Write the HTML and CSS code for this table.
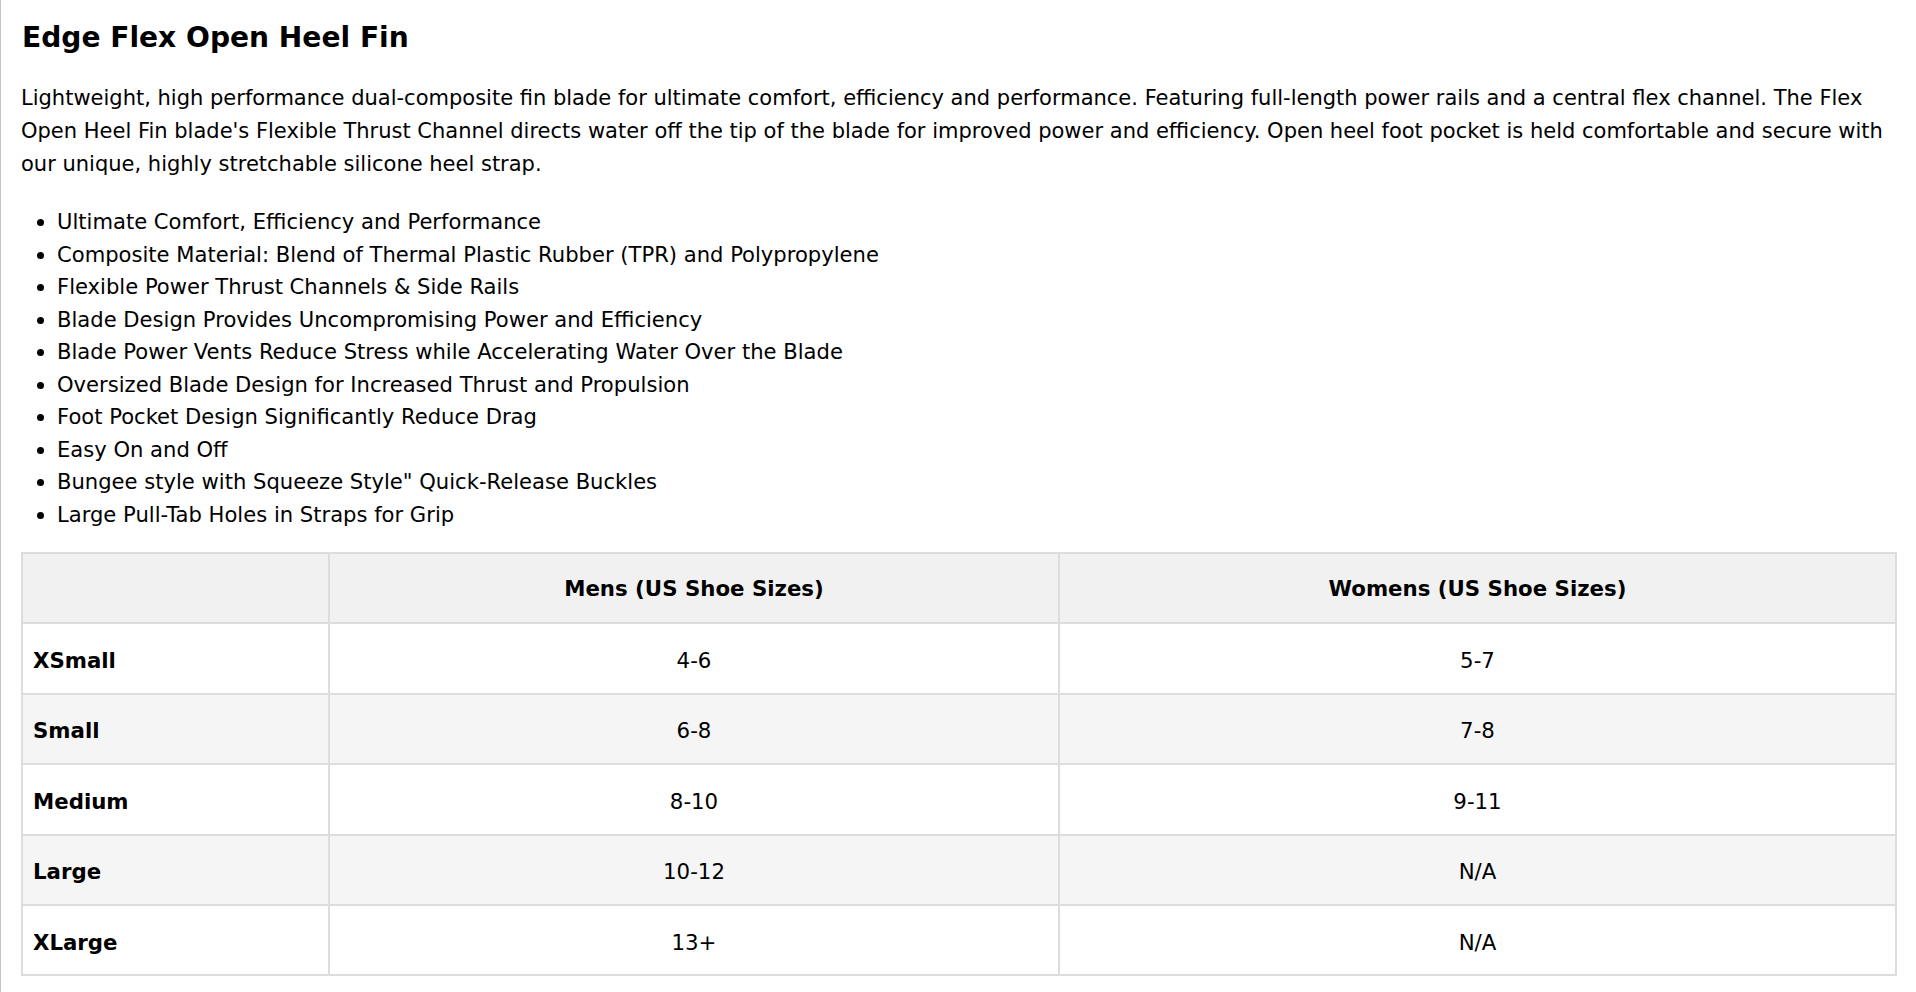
FILE: index.html
```html
<!DOCTYPE html>
<html lang="en">
<head>
<meta charset="utf-8">
<title>Edge Flex Open Heel Fin</title>
<link rel="stylesheet" href="styles.css">
</head>
<body>
<div class="page">
  <h1 class="title">Edge Flex Open Heel Fin</h1>
  <p class="desc">Lightweight, high performance dual-composite fin blade for ultimate comfort, efficiency and performance. Featuring full-length power rails and a central flex channel. The Flex Open Heel Fin blade's Flexible Thrust Channel directs water off the tip of the blade for improved power and efficiency. Open heel foot pocket is held comfortable and secure with our unique, highly stretchable silicone heel strap.</p>
  <ul class="features">
    <li>Ultimate Comfort, Efficiency and Performance</li>
    <li>Composite Material: Blend of Thermal Plastic Rubber (TPR) and Polypropylene</li>
    <li>Flexible Power Thrust Channels &amp; Side Rails</li>
    <li>Blade Design Provides Uncompromising Power and Efficiency</li>
    <li>Blade Power Vents Reduce Stress while Accelerating Water Over the Blade</li>
    <li>Oversized Blade Design for Increased Thrust and Propulsion</li>
    <li>Foot Pocket Design Significantly Reduce Drag</li>
    <li>Easy On and Off</li>
    <li>Bungee style with Squeeze Style" Quick-Release Buckles</li>
    <li>Large Pull-Tab Holes in Straps for Grip</li>
  </ul>
  <table class="sizes">
    <colgroup>
      <col class="c-size">
      <col class="c-mens">
      <col class="c-womens">
    </colgroup>
    <thead>
      <tr><th></th><th>Mens (US Shoe Sizes)</th><th>Womens (US Shoe Sizes)</th></tr>
    </thead>
    <tbody>
      <tr><th class="rowhead">XSmall</th><td>4-6</td><td>5-7</td></tr>
      <tr><th class="rowhead">Small</th><td>6-8</td><td>7-8</td></tr>
      <tr><th class="rowhead">Medium</th><td>8-10</td><td>9-11</td></tr>
      <tr><th class="rowhead">Large</th><td>10-12</td><td>N/A</td></tr>
      <tr><th class="rowhead">XLarge</th><td>13+</td><td>N/A</td></tr>
    </tbody>
  </table>
</div>
</body>
</html>
```

FILE: styles.css
```css
html, body {
  margin: 0;
  padding: 0;
  background: #ffffff;
}

body {
  font-family: "DejaVu Sans", sans-serif;
  color: #000000;
  font-size: 21px;
}

.page {
  border-left: 1px solid #c4c4c4;
  padding: 21px 19px 0 20px;
  min-height: 100vh;
  box-sizing: border-box;
}

.title {
  margin: 0 0 27px 1px;
  font-size: 28.1px;
  line-height: 34px;
  font-weight: bold;
}

.desc {
  margin: 0 0 25px 0;
  line-height: 33px;
}

.features {
  margin: 0 0 21px 0;
  padding: 0 0 0 36px;
  font-size: 21.1px;
  line-height: 32.5px;
}

.sizes {
  width: 100%;
  border-collapse: collapse;
  border: 2px solid #dddddd;
}

.c-size { width: 307px; }
.c-mens { width: 730px; }

.sizes th,
.sizes td {
  border: 2px solid #dddddd;
  height: 68.4px;
  padding: 0 10px;
  text-align: center;
  vertical-align: middle;
  font-size: 21.3px;
}

.sizes tbody th,
.sizes tbody td {
  height: 64.4px;
  padding-top: 4px;
}

.sizes thead th {
  background: #f1f1f1;
  font-weight: bold;
}

.sizes .rowhead {
  text-align: left;
  font-weight: bold;
}

.sizes tbody tr:nth-child(even) {
  background: #f5f5f5;
}
```
